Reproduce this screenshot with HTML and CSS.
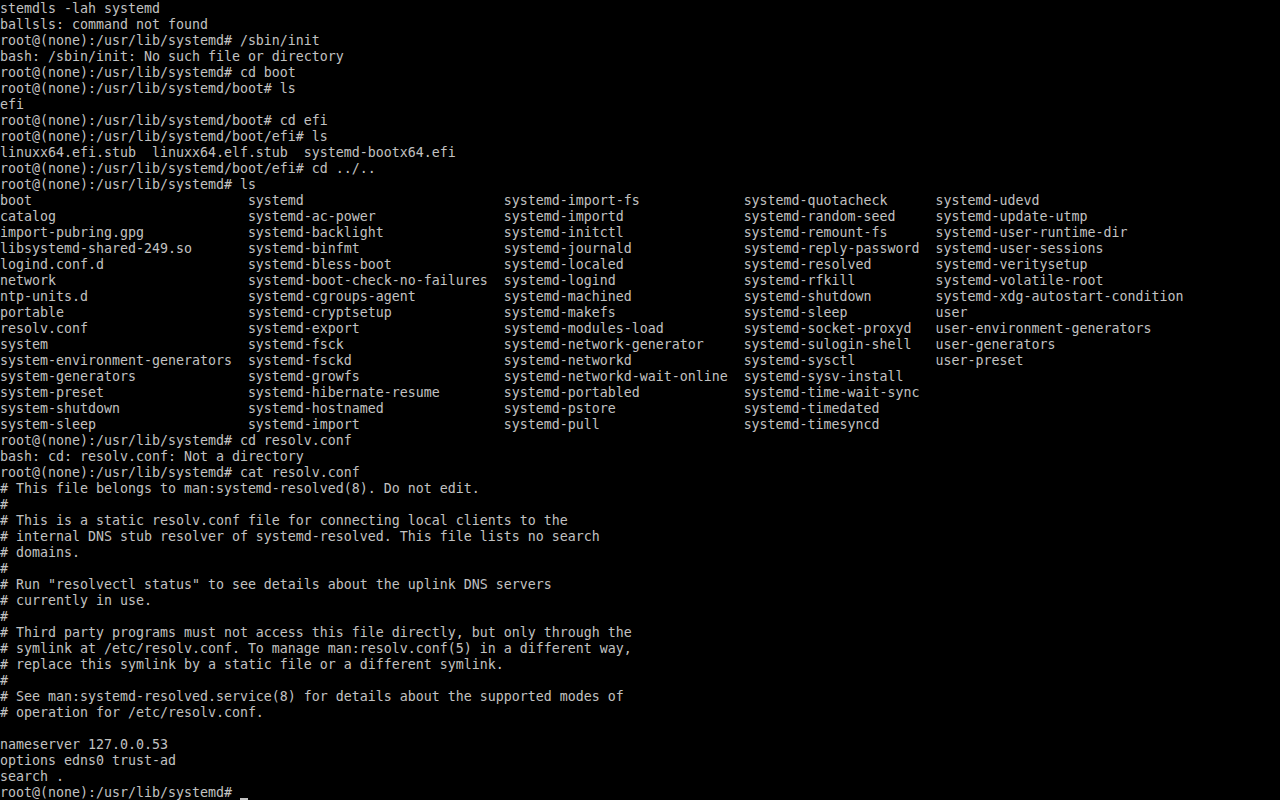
FILE: index.html
```html
<!DOCTYPE html>
<html lang="en">
<head>
<meta charset="utf-8">
<title>console</title>
<link rel="stylesheet" href="styles.css">
</head>
<body>
<pre class="console">stemdls -lah systemd
ballsls: command not found
root@(none):/usr/lib/systemd# /sbin/init
bash: /sbin/init: No such file or directory
root@(none):/usr/lib/systemd# cd boot
root@(none):/usr/lib/systemd/boot# ls
efi
root@(none):/usr/lib/systemd/boot# cd efi
root@(none):/usr/lib/systemd/boot/efi# ls
linuxx64.efi.stub  linuxx64.elf.stub  systemd-bootx64.efi
root@(none):/usr/lib/systemd/boot/efi# cd ../..
root@(none):/usr/lib/systemd# ls
boot                           systemd                         systemd-import-fs             systemd-quotacheck      systemd-udevd
catalog                        systemd-ac-power                systemd-importd               systemd-random-seed     systemd-update-utmp
import-pubring.gpg             systemd-backlight               systemd-initctl               systemd-remount-fs      systemd-user-runtime-dir
libsystemd-shared-249.so       systemd-binfmt                  systemd-journald              systemd-reply-password  systemd-user-sessions
logind.conf.d                  systemd-bless-boot              systemd-localed               systemd-resolved        systemd-veritysetup
network                        systemd-boot-check-no-failures  systemd-logind                systemd-rfkill          systemd-volatile-root
ntp-units.d                    systemd-cgroups-agent           systemd-machined              systemd-shutdown        systemd-xdg-autostart-condition
portable                       systemd-cryptsetup              systemd-makefs                systemd-sleep           user
resolv.conf                    systemd-export                  systemd-modules-load          systemd-socket-proxyd   user-environment-generators
system                         systemd-fsck                    systemd-network-generator     systemd-sulogin-shell   user-generators
system-environment-generators  systemd-fsckd                   systemd-networkd              systemd-sysctl          user-preset
system-generators              systemd-growfs                  systemd-networkd-wait-online  systemd-sysv-install
system-preset                  systemd-hibernate-resume        systemd-portabled             systemd-time-wait-sync
system-shutdown                systemd-hostnamed               systemd-pstore                systemd-timedated
system-sleep                   systemd-import                  systemd-pull                  systemd-timesyncd
root@(none):/usr/lib/systemd# cd resolv.conf
bash: cd: resolv.conf: Not a directory
root@(none):/usr/lib/systemd# cat resolv.conf
# This file belongs to man:systemd-resolved(8). Do not edit.
#
# This is a static resolv.conf file for connecting local clients to the
# internal DNS stub resolver of systemd-resolved. This file lists no search
# domains.
#
# Run "resolvectl status" to see details about the uplink DNS servers
# currently in use.
#
# Third party programs must not access this file directly, but only through the
# symlink at /etc/resolv.conf. To manage man:resolv.conf(5) in a different way,
# replace this symlink by a static file or a different symlink.
#
# See man:systemd-resolved.service(8) for details about the supported modes of
# operation for /etc/resolv.conf.

nameserver 127.0.0.53
options edns0 trust-ad
search .
root@(none):/usr/lib/systemd# <span class="cursor"> </span></pre>
</body>
</html>
```

FILE: styles.css
```css
html, body {
  margin: 0;
  padding: 0;
  background: #000;
  height: 100%;
  overflow: hidden;
}

.console {
  margin: 0;
  padding: 1px 0 0 0;
  color: #c2c2c2;
  font-family: "DejaVu Sans Mono", "Liberation Mono", monospace;
  font-size: 13.29px;
  line-height: 16px;
  letter-spacing: 0;
  white-space: pre;
}

.cursor {
  display: inline-block;
  width: 8px;
  height: 13px;
  border-bottom: 2px solid #c2c2c2;
  vertical-align: top;
}
```
